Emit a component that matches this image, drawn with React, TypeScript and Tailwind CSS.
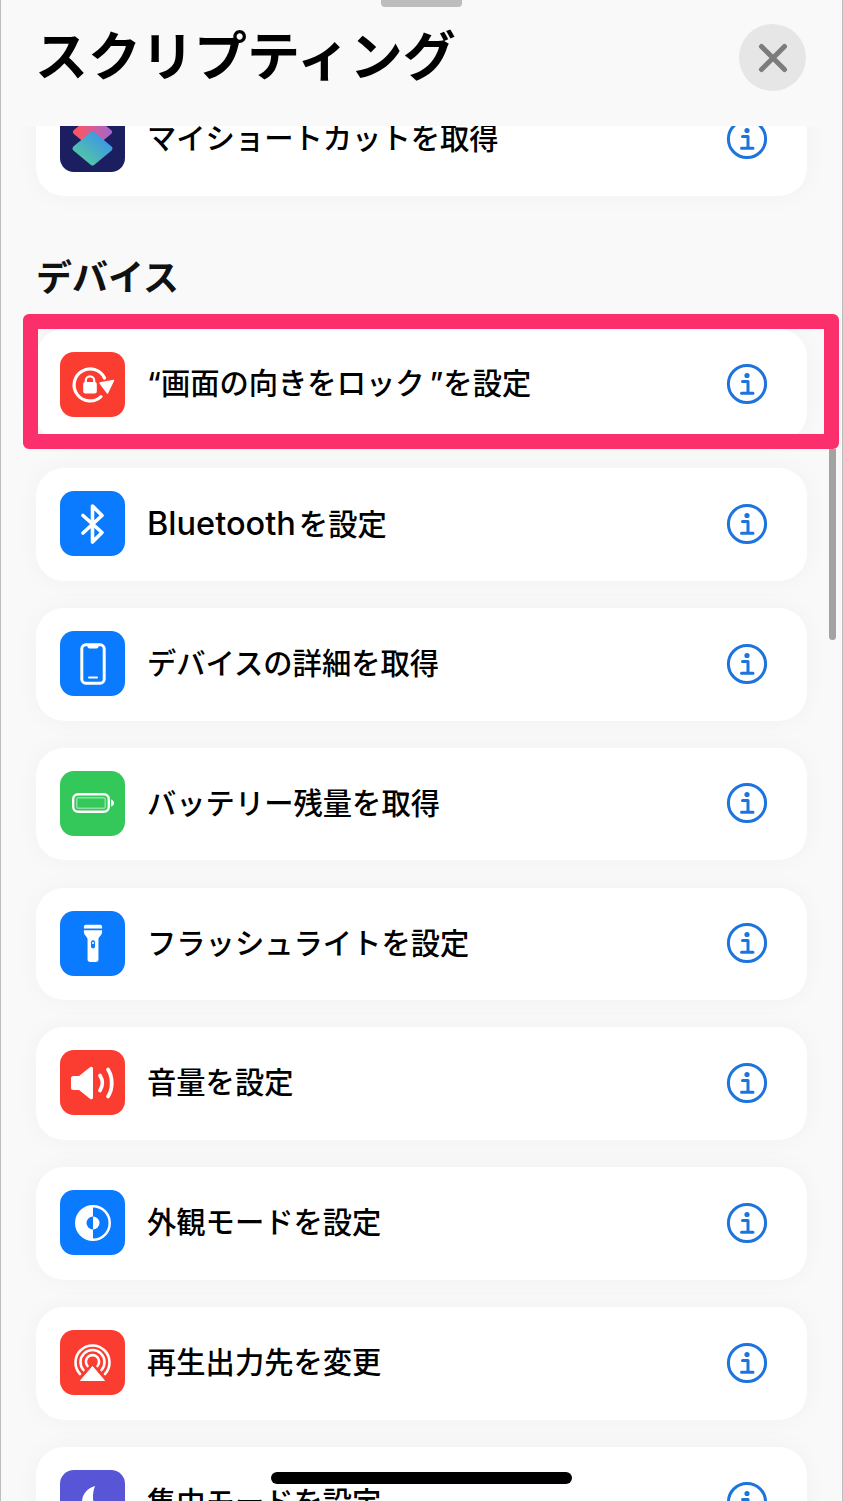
import type { ReactNode } from 'react';

const tone = { blue: 'bg-[#0a7aff]', red: 'bg-[#fb3c30]', green: 'bg-[#34c759]', navy: 'bg-[#1b1f5f]', purple: 'bg-[#5856d6]' };

function InfoIcon() {
  return (
    <svg width="42" height="42" viewBox="0 0 42 42" fill="none" className="shrink-0">
      <circle cx="21" cy="21" r="18.6" stroke="#1c74dc" strokeWidth="3" />
      <circle cx="21" cy="12.5" r="2.6" fill="#1c74dc" />
      <path d="M16.5 18.5H22V30M15.5 30.2H27" stroke="#1c74dc" strokeWidth="3" strokeLinecap="round" strokeLinejoin="round" />
    </svg>
  );
}

function LockRotateIcon() {
  return (
    <svg width="65" height="65" viewBox="0 0 65 65" fill="none">
      <path d="M41 44.6A16 16 0 1 1 44.5 26" stroke="white" strokeWidth="3.2" strokeLinecap="round" />
      <path d="M40 31L53.5 28.5L47.5 41Z" fill="white" stroke="white" strokeWidth="1.4" strokeLinejoin="round" />
      <path d="M25.8 31V28.5A4.2 4.2 0 0 1 34.2 28.5V31" stroke="white" strokeWidth="2.2" />
      <rect x="23.2" y="30" width="13.6" height="11.5" rx="2" fill="white" />
    </svg>
  );
}

function BluetoothIcon() {
  return (
    <svg width="28" height="42" viewBox="0 0 28 42" fill="none">
      <path d="M4 12.5L23 29.5L13.5 39V3L23 12.5L4 30" stroke="white" strokeWidth="3.6" strokeLinecap="round" strokeLinejoin="round" />
    </svg>
  );
}

function PhoneIcon() {
  return (
    <svg width="26" height="42" viewBox="0 0 26 42" fill="none">
      <rect x="1.8" y="1.8" width="22.4" height="38.4" rx="4" stroke="white" strokeWidth="3" />
      <path d="M7.5 2.5H18.5V3.5A2 2 0 0 1 16.5 5.5H9.5A2 2 0 0 1 7.5 3.5Z" fill="white" />
      <rect x="8" y="33.5" width="10" height="2" rx="1" fill="white" />
    </svg>
  );
}

function BatteryIcon() {
  return (
    <svg width="42" height="20" viewBox="0 0 42 20" fill="none">
      <rect x="1.2" y="1.2" width="35.6" height="17.6" rx="5" stroke="white" strokeWidth="2.4" />
      <rect x="4" y="4" width="30" height="12" rx="2.5" fill="white" fillOpacity="0.45" />
      <rect x="5.5" y="5.5" width="27" height="9" rx="1" fill="#34c759" />
      <path d="M39 6.5C41 7 42 8.5 42 10S41 13 39 13.5Z" fill="white" />
    </svg>
  );
}

function FlashlightIcon() {
  return (
    <svg width="20" height="42" viewBox="0 0 22 42" fill="none">
      <path d="M3 1H19A2 2 0 0 1 21 3V5H1V3A2 2 0 0 1 3 1Z" fill="white" />
      <path d="M1 7H21V9.5C21 12 17 14.5 17 17V39A3 3 0 0 1 14 42H8A3 3 0 0 1 5 39V17C5 14.5 1 12 1 9.5Z" fill="white" />
      <rect x="8.8" y="18" width="4.4" height="9" rx="2.2" fill="#0a7aff" />
      <circle cx="11" cy="21" r="1.2" fill="white" />
    </svg>
  );
}

function SpeakerIcon() {
  return (
    <svg width="44" height="34" viewBox="0 0 44 34" fill="none">
      <path d="M2 10H8L19 1.2C20.5 0 22 1 22 2.5V31.5C22 33 20.5 34 19 32.8L8 24H2C1 24 0 23 0 22V12C0 11 1 10 2 10Z" fill="white" />
      <path d="M29 9.5C32 14 32 20 29 24.5" stroke="white" strokeWidth="3.8" strokeLinecap="round" />
      <path d="M37 3.5C42 11 42 23 37 30.5" stroke="white" strokeWidth="3.8" strokeLinecap="round" />
    </svg>
  );
}

function AppearanceIcon() {
  return (
    <svg width="38" height="38" viewBox="0 0 38 38" fill="none">
      <circle cx="19" cy="19" r="18" fill="white" />
      <path d="M19 3.5A15.5 15.5 0 0 1 19 34.5Z" fill="#0a7aff" />
      <path d="M19 12.5A6.5 6.5 0 0 1 19 25.5Z" fill="white" />
      <path d="M19 12.5A6.5 6.5 0 0 0 19 25.5Z" fill="#0a7aff" />
    </svg>
  );
}

function AirPlayIcon() {
  return (
    <svg width="65" height="65" viewBox="0 0 65 65" fill="none">
      <path d="M20 44A17 17 0 1 1 45 44" stroke="white" strokeWidth="2.6" strokeLinecap="round" />
      <path d="M23.5 40A12 12 0 1 1 41.5 40" stroke="white" strokeWidth="2.6" strokeLinecap="round" />
      <path d="M27.5 36A6.6 6.6 0 1 1 37.5 36" stroke="white" strokeWidth="2.6" strokeLinecap="round" />
      <path d="M32.5 36.5L44.5 50.5H20.5Z" fill="white" stroke="white" strokeWidth="1" strokeLinejoin="round" />
    </svg>
  );
}

function MoonIcon() {
  return (
    <svg width="34" height="36" viewBox="0 0 34 36" fill="none">
      <path d="M19 2C11 4 6 11 6 18C6 27 14 34 23 34C27 34 30 33 32 31C21 31 13 18 19 2Z" fill="white" />
    </svg>
  );
}

function ShortcutsIcon() {
  return (
    <svg width="65" height="65" viewBox="0 0 65 65">
      <defs>
        <linearGradient id="sc-top" x1="0" y1="0" x2="1" y2="0">
          <stop offset="0" stopColor="#ff5560" />
          <stop offset="1" stopColor="#a866c8" />
        </linearGradient>
        <linearGradient id="sc-bottom" x1="1" y1="0" x2="0" y2="1">
          <stop offset="0" stopColor="#3a8df0" />
          <stop offset="1" stopColor="#56cf9a" />
        </linearGradient>
      </defs>
      <path d="M32.5 11L49.5 25L32.5 39L15.5 25Z" fill="url(#sc-top)" stroke="url(#sc-top)" strokeWidth="5" strokeLinejoin="round" />
      <path d="M32.5 27L50 41.5L32.5 56L15 41.5Z" fill="url(#sc-bottom)" stroke="url(#sc-bottom)" strokeWidth="5" strokeLinejoin="round" />
    </svg>
  );
}

function Row({ icon, bg, label, tail = 'mb-[27.3px]' }: { icon: ReactNode; bg: string; label: ReactNode; tail?: string }) {
  return (
    <div className={`${tail} flex h-[112.5px] items-center rounded-[28px] bg-white pr-[39.5px] pb-[1.5px] pl-6 shadow-[0_0_26px_rgba(0,0,0,0.035)]`}>
      <div className={`${bg} flex h-[65px] w-[65px] shrink-0 items-center justify-center overflow-hidden rounded-[14px]`}>
        {icon}
      </div>
      <span
        className="ml-[22px] flex-1 text-[29.3px] leading-none font-medium text-black"
        style={{ fontFamily: 'Inter, "Noto Sans CJK JP", sans-serif' }}
      >
        {label}
      </span>
      <InfoIcon />
    </div>
  );
}

export default function App() {
  return (
    <div
      className="relative flex h-[1501px] w-[843px] flex-col overflow-hidden border-x border-x-[#bdbdbd] bg-[#f9f9f9]"
      style={{ fontFamily: '"Noto Sans CJK JP", "Noto Sans", sans-serif' }}
    >
      <div className="absolute top-0 left-[380px] h-[7px] w-[81px] rounded-b-[4px] bg-[#bdbdbd]" />

      <header className="flex h-[126px] shrink-0 items-start justify-between pr-9 pl-[34px]">
        <h1 className="mt-[17px] text-[53px] leading-[72px] font-bold text-black">スクリプティング</h1>
        <button className="mt-6 flex h-[67px] w-[67px] items-center justify-center rounded-full bg-[#e6e6e6]">
          <svg width="30" height="30" viewBox="0 0 30 30" fill="none">
            <path d="M3.5 3.5L26.5 26.5M26.5 3.5L3.5 26.5" stroke="#7c7c7c" strokeWidth="5" strokeLinecap="round" />
          </svg>
        </button>
      </header>

      <main className="min-h-0 flex-1 overflow-hidden px-[35px]">
        <div className="-mt-[42.5px]">
          <Row bg={tone.navy} icon={<ShortcutsIcon />} label="マイショートカットを取得" tail="mb-0" />

          <h2 className="mt-[54.5px] mb-[30px] h-[48px] text-[36px] leading-[48px] font-bold text-[#111]">デバイス</h2>

          <div className="relative">
            <Row
              bg={tone.red}
              icon={<LockRotateIcon />}
              label={
                <>
                  “画面の向きをロック<span className="pl-[5px]">”</span>を設定
                </>
              }
            />
            {/* highlight frame */}
            <div className="absolute -top-[15px] -right-[32px] -left-[13px] h-[135px] rounded-[6px] border-[15px] border-[#fb2f6b]" />
          </div>
          <Row
            bg={tone.blue}
            icon={<BluetoothIcon />}
            label={
              <>
                <span className="pr-[3px] text-[32.5px]">Bluetooth</span>を設定
              </>
            }
          />
          <Row bg={tone.blue} icon={<PhoneIcon />} label="デバイスの詳細を取得" />
          <Row bg={tone.green} icon={<BatteryIcon />} label="バッテリー残量を取得" />
          <Row bg={tone.blue} icon={<FlashlightIcon />} label="フラッシュライトを設定" />
          <Row bg={tone.red} icon={<SpeakerIcon />} label="音量を設定" />
          <Row bg={tone.blue} icon={<AppearanceIcon />} label="外観モードを設定" />
          <Row bg={tone.red} icon={<AirPlayIcon />} label="再生出力先を変更" />
          <Row bg={tone.purple} icon={<MoonIcon />} label="集中モードを設定" />
        </div>
      </main>

      {/* scrollbar and home indicator */}
      <div className="absolute top-[449px] left-[828px] h-[191px] w-[7px] rounded-b-full bg-[#a3a3a3]" />
      <div className="absolute top-[1472px] left-[270px] h-[12px] w-[301px] rounded-full bg-black" />
    </div>
  );
}
